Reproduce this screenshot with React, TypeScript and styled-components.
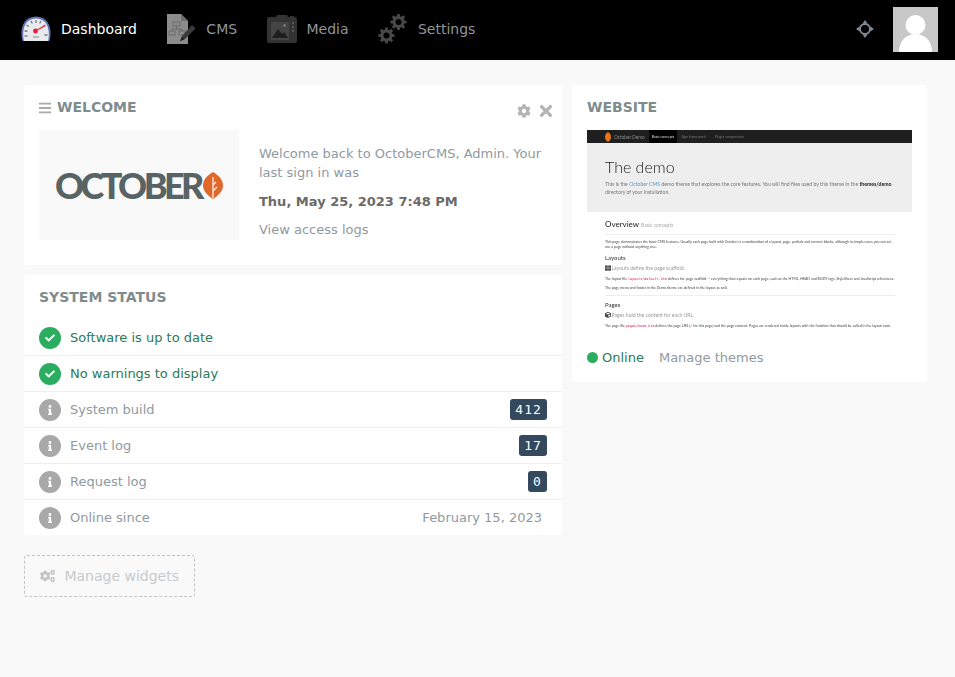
import React from "react";
import styled, { createGlobalStyle } from "styled-components";
import { FaBars, FaCheck, FaCog, FaCogs, FaCube, FaInfo, FaThLarge, FaTimes } from "react-icons/fa";

const GlobalStyle = createGlobalStyle`
  html, body {
    margin: 0;
    padding: 0;
    height: 100%;
    background: #f9f9f9;
  }
  * { box-sizing: border-box; }
`;

const Page = styled.div`
  min-height: 677px;
  background: #f9f9f9;
  font-family: "DejaVu Sans", sans-serif;
  font-size: 13px;
  color: #8a9499;
`;

// Top bar
const TopBar = styled.header`
  height: 60px;
  background: #000;
  display: flex;
  align-items: center;
  padding: 0 17px 2px 21px;
`;

const Nav = styled.nav`
  display: flex;
  align-items: center;
  gap: 29.4px;
  flex: 1;
`;

const NavItem = styled.a<{ $active?: boolean }>`
  display: flex;
  align-items: center;
  gap: 10px;
  font-size: 14px;
  color: ${({ $active }) => ($active ? "#fff" : "#8f9599")};
`;

const NavIcon = styled.svg`
  width: 30px;
  height: 32px;
  display: block;
`;

const TopRight = styled.div`
  display: flex;
  align-items: center;
  gap: 19px;
`;

const Crosshair = styled.svg`
  width: 18px;
  height: 18px;
  display: block;
`;

const Avatar = styled.svg`
  width: 45px;
  height: 45px;
  display: block;
  margin-top: 1px;
`;

// Main grid
const Main = styled.main`
  display: grid;
  grid-template-columns: 538px 355px;
  gap: 10px;
  padding: 25px 0 0 24px;
  align-items: start;
`;

const Column = styled.div`
  display: flex;
  flex-direction: column;
  gap: 10px;
`;

const Card = styled.section`
  position: relative;
  background: #fff;
  border-radius: 3px;
`;

const CardTitle = styled.h3`
  margin: 0;
  font-size: 14px;
  line-height: 17px;
  font-weight: 700;
  color: #7f8c8d;
  text-transform: uppercase;
  display: flex;
  align-items: center;
  gap: 5px;
`;

const MenuIcon = styled(FaBars)`
  margin-left: -1px;
  color: #aaa;
`;

const WelcomeCard = styled(Card)`
  height: 180px;
  padding: 14px 15px 0;
`;

const CardTools = styled.div`
  position: absolute;
  top: 17px;
  right: 7px;
  display: flex;
  align-items: center;
  gap: 6px;
  color: #b4b4b4;
`;

const WelcomeBody = styled.div`
  display: flex;
  gap: 20px;
  margin-top: 14px;
`;

const LogoBox = styled.div`
  width: 200px;
  height: 110px;
  background: #f9f9f9;
  display: flex;
  align-items: center;
  padding: 0 0 0 16px;
`;

const LogoText = styled.span`
  font-family: Lato, "Liberation Sans", sans-serif;
  font-weight: 900;
  font-size: 36px;
  line-height: 1;
  letter-spacing: -3.6px;
  color: #586365;
`;

const Leaf = styled.svg`
  width: 20px;
  height: 27px;
  display: block;
  margin-left: 2px;
`;

const WelcomeText = styled.div`
  flex: 1;
  padding-top: 14px;
  line-height: 19px;
  color: #8f9a9f;
`;

const Para = styled.p`
  margin: 0 0 10px;
`;

const Strong = styled.p`
  margin: 0 0 9px;
  font-weight: 700;
  color: #6c6a68;
`;

const StatusCard = styled(Card)`
  padding-top: 14px;
  height: 260px;
`;

const StatusTitle = styled(CardTitle)`
  padding: 0 15px;
  margin-bottom: 14px;
`;

const Row = styled.div`
  height: 36px;
  display: flex;
  align-items: center;
  padding: 0 15px;
  border-bottom: 1px solid #eee;
  &:last-child { border-bottom-color: transparent; }
`;

const StatusIcon = styled.span<{ $ok?: boolean }>`
  width: 22px;
  height: 22px;
  border-radius: 50%;
  background: ${({ $ok }) => ($ok ? "#2bad60" : "#a8a8a8")};
  color: #fff;
  display: flex;
  align-items: center;
  justify-content: center;
  font-size: 10px;
  margin-right: 9px;
`;

const RowLabel = styled.span<{ $ok?: boolean }>`
  flex: 1;
  color: ${({ $ok }) => ($ok ? "#2b7a58" : "#8f9a9f")};
`;

const Badge = styled.span`
  background: #34495e;
  color: #fff;
  border-radius: 3px;
  font-family: "DejaVu Sans Mono", monospace;
  font-size: 13px;
  line-height: 21px;
  height: 21px;
  padding: 0 5.2px;
  letter-spacing: 1px;
`;

const RowValue = styled.span`
  margin-right: 5px;
  color: #8f9a9f;
`;

const ManageWidgets = styled.button`
  align-self: flex-start;
  margin-top: 10px;
  width: 171px;
  height: 42px;
  background: transparent;
  border: 1px dashed #c4c4c4;
  border-radius: 3px;
  display: flex;
  align-items: center;
  gap: 9px;
  padding: 0 15px;
  font-family: inherit;
  font-size: 14px;
  white-space: nowrap;
  color: #c6cbce;
`;

const WebsiteCard = styled(Card)`
  height: 297px;
  padding: 14px 15px 0;
`;

// Website thumbnail
const Thumb = styled.div`
  margin-top: 14px;
  height: 206px;
  overflow: hidden;
  background: #fff;
  font-family: Lato, sans-serif;
  color: #444;
  filter: blur(0.25px);
`;

const ThumbNav = styled.div`
  height: 13px;
  background: #1f1f1f;
  display: flex;
  align-items: center;
  padding-left: 17px;
  font-size: 3.5px;
  color: #8b8b8b;
`;

const ThumbBrand = styled.span`
  display: flex;
  align-items: center;
  gap: 2px;
  font-size: 4.7px;
  margin-right: 4px;
`;

const ThumbTab = styled.span<{ $active?: boolean }>`
  height: 13px;
  display: flex;
  align-items: center;
  padding: 0 3px;
  margin-right: ${({ $active }) => ($active ? 1 : 3)}px;
  background: ${({ $active }) => ($active ? "#000" : "transparent")};
  color: ${({ $active }) => ($active ? "#ddd" : "#777")};
`;

const ThumbHero = styled.div`
  height: 69px;
  background: #eee;
  padding: 13px 18px 0;
`;

const ThumbH1 = styled.div`
  font-size: 16px;
  line-height: 21px;
  font-weight: 300;
  color: #222;
`;

const ThumbLead = styled.div`
  font-size: 5.15px;
  line-height: 8px;
  margin-top: 3px;
  color: #777;
  white-space: nowrap;
  b { color: #222; }
  span { color: #5b9bd1; }
`;

const ThumbBody = styled.div`
  padding: 7px 17px 0 18px;
`;

const ThumbH2 = styled.div`
  font-size: 8px;
  line-height: 10px;
  color: #222;
  small { font-size: 5px; color: #aaa; }
`;

const ThumbRule = styled.div`
  height: 1px;
  background: #eee;
  margin: 4px 0 4px;
`;

const ThumbP = styled.div<{ $gap?: number }>`
  font-size: 3.55px;
  line-height: 5.4px;
  color: #444;
  margin-bottom: ${({ $gap }) => $gap ?? 3}px;
  white-space: nowrap;
  code { font-family: "DejaVu Sans Mono", monospace; font-size: 3.4px; color: #d14; }
`;

const ThumbH3 = styled.div`
  font-size: 6px;
  line-height: 9px;
  color: #333;
  margin-top: 3px;
`;

const ThumbSub = styled.div`
  font-size: 5.1px;
  line-height: 10px;
  color: #999;
  margin: 1px 0 3px;
  display: flex;
  align-items: center;
  gap: 0.5px;
  svg { color: #444; }
`;

const WebsiteFoot = styled.div`
  display: flex;
  align-items: center;
  margin-top: 14px;
  color: #8f9a9f;
`;

const OnlineDot = styled.span`
  width: 11px;
  height: 11px;
  border-radius: 50%;
  background: #2bad60;
  margin-right: 4px;
`;

const OnlineText = styled.span`
  color: #2b7a58;
  margin-right: 15px;
`;

const GaugeIcon = () => (
  <NavIcon viewBox="0 0 30 32">
    <path d="M1.5 28 C-1 20 0 3.5 15 3.5 C30 3.5 31 20 28.5 28 Z" fill="#6272b0" />
    <path d="M3 28 C1 20 2 5.5 15 5.5 C28 5.5 29 20 27 28 Z" fill="#e8ebee" />
    <g stroke="#777" strokeWidth="1.3">
      <path d="M3.5 18h3M23.5 22h3M5.5 12l2.4 1.5M24.5 12l-2.4 1.5M10 8l1.4 2.4M20 8l-1.4 2.4M15 7v3" />
      <path d="M3.5 23h3" />
    </g>
    <path d="M14.5 18 L24 12.7" stroke="#ef3340" strokeWidth="1.4" />
    <circle cx="14.5" cy="18" r="2.4" fill="#ef1b33" />
    <path d="M12 24h6" stroke="#aaa" strokeWidth="1.5" />
  </NavIcon>
);

const CmsIcon = () => (
  <NavIcon viewBox="0 0 30 32">
    <path d="M1 1 H15 L22 8 V31 H1 Z" fill="#8c8c8c" />
    <path d="M15 1 L22 8 H15 Z" fill="#6e6e6e" />
    <g fill="none" stroke="#6a6a6a" strokeWidth="1">
      <rect x="7" y="9" width="7" height="4" />
      <rect x="3" y="18" width="6" height="4" />
      <rect x="13" y="18" width="6" height="4" />
      <path d="M10.5 13v3M6 18v-2h10v2" />
    </g>
    <path d="M14 28 L16 23 L26 12 L29.5 15.5 L19 26 Z" fill="#3a3a3a" />
    <path d="M14 28 L16 24 L18.5 26.5 Z" fill="#222" />
  </NavIcon>
);

const MediaIcon = () => (
  <NavIcon viewBox="0 0 30 32">
    <path d="M2 4 H9 L10 2 H20 L21 4 H23 V3 H27 V4 A3 3 0 0 1 30 7 V28 A2 2 0 0 1 28 30 H2 A2 2 0 0 1 0 28 V7 A3 3 0 0 1 2 4 Z" fill="#333" />
    <rect x="4" y="9" width="18" height="18" fill="#444" />
    <path d="M5 25 L11 16 L15 21 L17 19 L21 25 Z" fill="#1e1e1e" />
    <circle cx="17.5" cy="12.5" r="1.4" fill="#777" />
    <g fill="#555">
      <circle cx="26" cy="10" r="1.2" />
      <circle cx="26" cy="14" r="1.2" />
      <circle cx="26" cy="18" r="1.2" />
    </g>
  </NavIcon>
);

// Gear path drawn around the origin, used twice in the settings icon
const gearPath = (() => {
  let d = "";
  for (let i = 0; i < 8; i++) {
    const a = (i * Math.PI) / 4;
    const pt = (r: number, o: number) =>
      `${(r * Math.cos(a + o)).toFixed(2)} ${(r * Math.sin(a + o)).toFixed(2)}`;
    d += `${i === 0 ? "M" : "L"}${pt(6, -0.26)} L${pt(8.2, -0.16)} L${pt(8.2, 0.16)} L${pt(6, 0.26)} `;
  }
  return d + "Z";
})();

const SettingsIcon = () => (
  <NavIcon viewBox="0 0 30 32">
    <g transform="translate(20.5 9)">
      <path d={gearPath} fill="#484848" />
      <circle r="3" fill="#000" />
    </g>
    <g transform="translate(8.5 22.5)">
      <path d={gearPath} fill="#484848" />
      <circle r="3" fill="#000" />
    </g>
  </NavIcon>
);

const Thumbnail = () => (
  <Thumb>
    <ThumbNav>
      <ThumbBrand>
        <svg width="8" height="10" viewBox="0 0 8 10">
          <path d="M4 0 C8 2 8 8 4 10 C0 8 0 2 4 0 Z" fill="#e8721c" />
        </svg>
        October Demo
      </ThumbBrand>
      <ThumbTab $active>Basic concepts</ThumbTab>
      <ThumbTab>Ajax framework</ThumbTab>
      <ThumbTab>Plugin components</ThumbTab>
    </ThumbNav>
    <ThumbHero>
      <ThumbH1>The demo</ThumbH1>
      <ThumbLead>
        This is the <span>October CMS</span> demo theme that explores the core features. You will find files used by this theme in the <b>themes/demo</b>
        <br />
        directory of your installation.
      </ThumbLead>
    </ThumbHero>
    <ThumbBody>
      <ThumbH2>
        Overview <small>Basic concepts</small>
      </ThumbH2>
      <ThumbRule />
      <ThumbP $gap={2}>
        This page demonstrates the basic CMS features. Usually each page built with October is a combination of a layout, page, partials and content blocks, although in simple cases you can set
        <br />
        use a page without anything else.
      </ThumbP>
      <ThumbH3>Layouts</ThumbH3>
      <ThumbSub>
        <FaThLarge size={6} />
        Layouts define the page scaffold.
      </ThumbSub>
      <ThumbP>
        The layout file <code>layouts/default.htm</code> defines the page scaffold — everything that repeats on each page, such as the HTML, HEAD and BODY tags, StyleSheet and JavaScript references.
      </ThumbP>
      <ThumbP $gap={0}>The page menu and footer in the Demo theme are defined in the layout as well.</ThumbP>
      <ThumbRule />
      <ThumbH3>Pages</ThumbH3>
      <ThumbSub>
        <FaCube size={6} />
        Pages hold the content for each URL.
      </ThumbSub>
      <ThumbP>
        The page file <code>pages/home.htm</code> defines the page URL (<code>/</code> for this page) and the page content. Pages are rendered inside layouts with the function that should be called in the layout code.
      </ThumbP>
    </ThumbBody>
  </Thumb>
);

export default function App() {
  return (
    <Page>
      <GlobalStyle />
      <TopBar>
        <Nav>
          <NavItem $active>
            <GaugeIcon />
            Dashboard
          </NavItem>
          <NavItem>
            <CmsIcon />
            CMS
          </NavItem>
          <NavItem>
            <MediaIcon />
            Media
          </NavItem>
          <NavItem>
            <SettingsIcon />
            Settings
          </NavItem>
        </Nav>
        <TopRight>
          <Crosshair viewBox="0 0 18 18">
            <circle cx="9" cy="9" r="5" fill="none" stroke="#7f8a92" strokeWidth="2" />
            <path d="M9 0 L11.5 3.5 H6.5 Z M9 18 L6.5 14.5 H11.5 Z M0 9 L3.5 6.5 V11.5 Z M18 9 L14.5 11.5 V6.5 Z" fill="#7f8a92" />
          </Crosshair>
          <Avatar viewBox="0 0 45 45">
            <rect width="45" height="45" fill="#c8c8c8" />
            <circle cx="22.5" cy="18" r="10" fill="#fff" />
            <path d="M6 45 C6 33 14 27 22.5 27 C31 27 39 33 39 45 Z" fill="#fff" />
          </Avatar>
        </TopRight>
      </TopBar>
      <Main>
        <Column>
          <WelcomeCard>
            <CardTitle>
              <MenuIcon size={14} />
              Welcome
            </CardTitle>
            <CardTools>
              <FaCog size={14} />
              <FaTimes size={18} />
            </CardTools>
            <WelcomeBody>
              <LogoBox>
                <LogoText>OCTOBER</LogoText>
                <Leaf viewBox="0 0 20 27">
                  <path d="M10 0 C17 4 20 9 20 13.5 C20 19 15 24 10 27 C5 24 0 19 0 13.5 C0 9 3 4 10 0 Z" fill="#e0682a" />
                  <path d="M10 5 V26 M10 13 L13 10 M10 19 L14 15" stroke="#f9f9f9" strokeWidth="1.2" fill="none" />
                </Leaf>
              </LogoBox>
              <WelcomeText>
                <Para>Welcome back to OctoberCMS, Admin. Your last sign in was</Para>
                <Strong>Thu, May 25, 2023 7:48 PM</Strong>
                <Para>View access logs</Para>
              </WelcomeText>
            </WelcomeBody>
          </WelcomeCard>
          <StatusCard>
            <StatusTitle>System status</StatusTitle>
            <Row>
              <StatusIcon $ok><FaCheck /></StatusIcon>
              <RowLabel $ok>Software is up to date</RowLabel>
            </Row>
            <Row>
              <StatusIcon $ok><FaCheck /></StatusIcon>
              <RowLabel $ok>No warnings to display</RowLabel>
            </Row>
            <Row>
              <StatusIcon><FaInfo /></StatusIcon>
              <RowLabel>System build</RowLabel>
              <Badge>412</Badge>
            </Row>
            <Row>
              <StatusIcon><FaInfo /></StatusIcon>
              <RowLabel>Event log</RowLabel>
              <Badge>17</Badge>
            </Row>
            <Row>
              <StatusIcon><FaInfo /></StatusIcon>
              <RowLabel>Request log</RowLabel>
              <Badge>0</Badge>
            </Row>
            <Row>
              <StatusIcon><FaInfo /></StatusIcon>
              <RowLabel>Online since</RowLabel>
              <RowValue>February 15, 2023</RowValue>
            </Row>
          </StatusCard>
          <ManageWidgets>
            <FaCogs size={16} color="#c0c4c6" />
            Manage widgets
          </ManageWidgets>
        </Column>
        <Column>
          <WebsiteCard>
            <CardTitle>Website</CardTitle>
            <Thumbnail />
            <WebsiteFoot>
              <OnlineDot />
              <OnlineText>Online</OnlineText>
              Manage themes
            </WebsiteFoot>
          </WebsiteCard>
        </Column>
      </Main>
    </Page>
  );
}
